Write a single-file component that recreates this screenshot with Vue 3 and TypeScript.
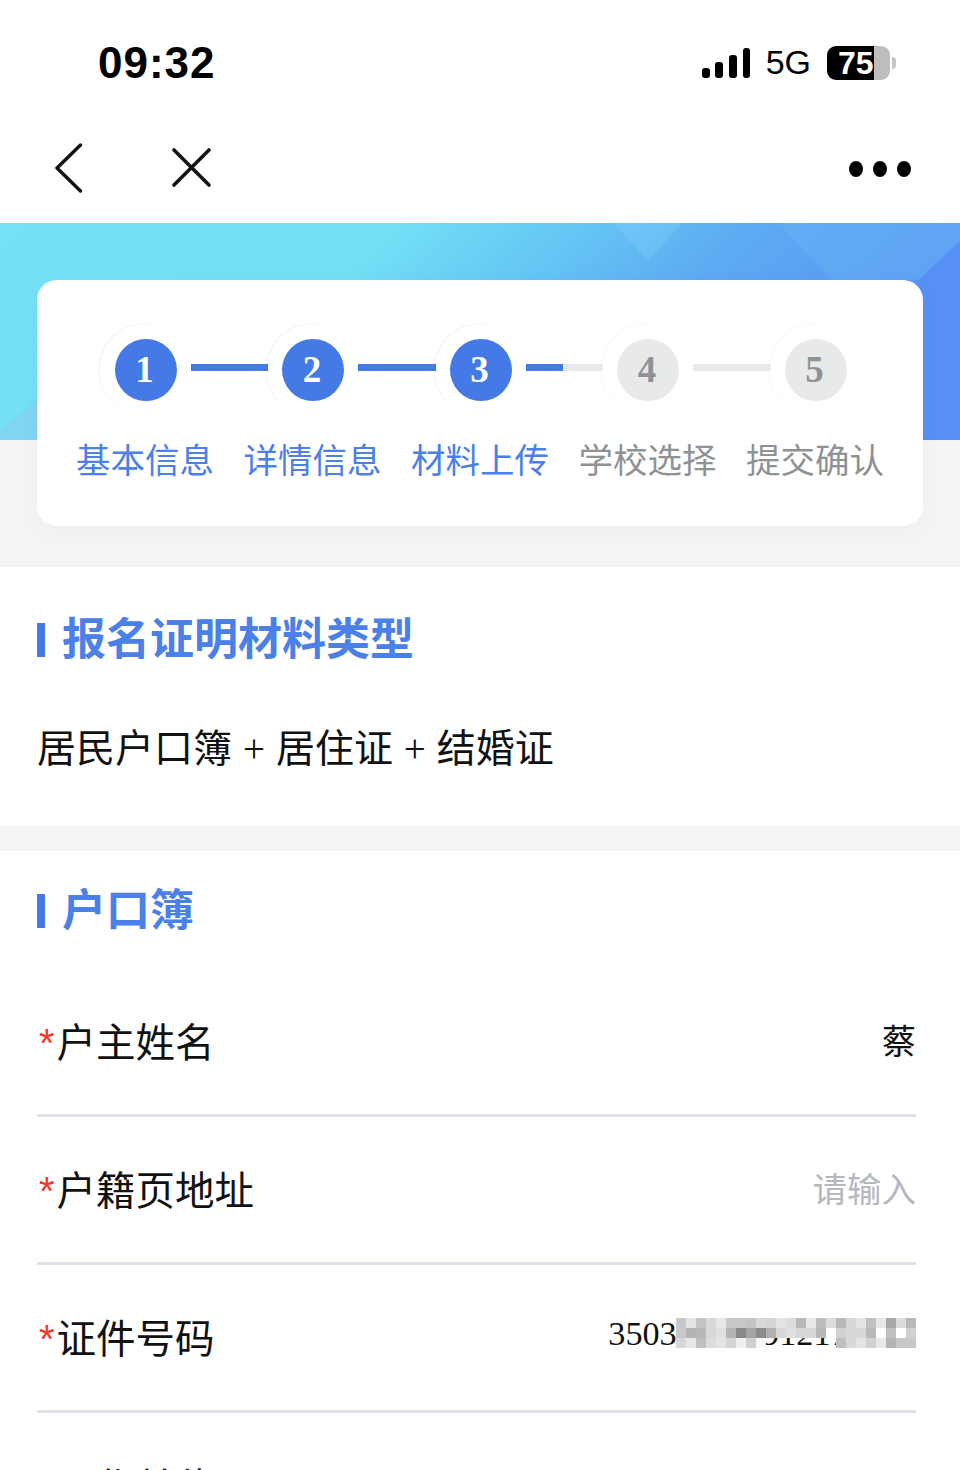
<script setup lang="ts">
const steps = [
  { n: 1, label: '基本信息', on: true },
  { n: 2, label: '详情信息', on: true },
  { n: 3, label: '材料上传', on: true },
  { n: 4, label: '学校选择', on: false },
  { n: 5, label: '提交确认', on: false },
]
const connectors = [100, 100, 48, 0]
const rows = [
  { label: '户主姓名', value: '蔡', kind: 'val' },
  { label: '户籍页地址', value: '请输入', kind: 'ph' },
]
const mosaicShades = [
  'c8,e4,c4,d8,e8,c8,c8,c4,d8,d4,e4,dc,b8,e8,bc,dc,b8,d8,e4,c0,e8,a8,dc,b8',
  'c8,b4,b8,d8,e0,b4,88,a4,8c,b0,d8,e0,d8,d8,b8,ff,d0,d8,d8,b8,ff,c0,ff,d0',
  'd8,e8,c0,dc,e4,d4,f0,d0,f8,0,0,0,0,0,0,0,c0,d8,e4,d0,e8,b4,c8,c8',
]
const mosaic = mosaicShades.flatMap((r) =>
  r.split(',').map((h) => (h === '0' ? 'transparent' : `#${h}${h}${h}`)),
)
</script>

<template>
  <div class="page">
    <header class="status">
      <span class="time">09:32</span>
      <div class="status-right">
        <svg class="signal" viewBox="0 0 48 30" width="48" height="30">
          <rect x="0" y="20" width="8" height="10" rx="3" />
          <rect x="13" y="14" width="8" height="16" rx="3" />
          <rect x="27" y="7" width="8" height="23" rx="3" />
          <rect x="41" y="0" width="7" height="30" rx="3" />
        </svg>
        <span class="net">5G</span>
        <div class="battery">
          <div class="battery-body"><span class="battery-num">75</span></div>
          <i class="battery-cap"></i>
        </div>
      </div>
    </header>

    <nav class="nav">
      <div class="nav-left">
        <svg width="32" height="52" viewBox="0 0 32 52" fill="none" stroke="#111" stroke-width="3.4" stroke-linecap="round" stroke-linejoin="round">
          <path d="M27.5 2 L4 25 L27.5 48" />
        </svg>
        <svg class="close" width="44" height="44" viewBox="0 0 44 44" fill="none" stroke="#111" stroke-width="3.6" stroke-linecap="round">
          <path d="M4 3 L39 38 M39 3 L4 38" />
        </svg>
      </div>
      <div class="dots"><i></i><i></i><i></i></div>
    </nav>

    <section class="hero">
      <svg class="hero-art" viewBox="0 0 960 217" preserveAspectRatio="none">
        <defs>
          <linearGradient id="heroGrad" x1="0" y1="0" x2="1" y2="0.23">
            <stop offset="0" stop-color="#74e2f6" />
            <stop offset="0.4" stop-color="#72dff5" />
            <stop offset="0.6" stop-color="#64c2f4" />
            <stop offset="0.75" stop-color="#5daaf2" />
            <stop offset="1" stop-color="#5a94f4" />
          </linearGradient>
        </defs>
        <rect width="960" height="217" fill="url(#heroGrad)" />
        <path d="M614 0 L682 0 L648 38 Z" fill="#8fdcfb" opacity="0.25" />
        <path d="M778 0 L960 0 L960 57 L832 57 Z" fill="#66b4f5" opacity="0.45" />
        <path d="M960 18 L913 62 L913 217 L960 217 Z" fill="#5690f5" />
        <path d="M0 217 L0 207 L37 177 L37 217 Z" fill="#82d4f4" />
      </svg>
      <div class="card">
        <div class="steps">
          <template v-for="(s, i) in steps" :key="s.n">
            <div class="step" :class="{ on: s.on }">
              <div class="bubble">
                <span class="num">{{ s.n }}</span>
              </div>
              <span class="step-label">{{ s.label }}</span>
            </div>
            <div v-if="i < connectors.length" class="link">
              <div class="link-fill" :style="{ width: connectors[i] + '%' }"></div>
            </div>
          </template>
        </div>
      </div>
    </section>

    <section class="block first">
      <h2 class="title">报名证明材料类型</h2>
      <p class="type">居民户口簿 + 居住证 + 结婚证</p>
    </section>

    <section class="block second">
      <h2 class="title">户口簿</h2>
      <div class="form">
        <div v-for="r in rows" :key="r.label" class="row">
          <span class="label"><em>*</em>{{ r.label }}</span>
          <span :class="r.kind">{{ r.value }}</span>
        </div>
        <div class="row">
          <span class="label"><em>*</em>证件号码</span>
          <div class="idnum">
            <span class="id-text">350300000912170000</span>
            <div class="mosaic">
              <i v-for="(c, i) in mosaic" :key="i" :style="{ background: c }"></i>
            </div>
          </div>
        </div>
        <div class="row last">
          <span class="label"><em>*</em>工作单位</span>
          <span class="ph">请输入</span>
        </div>
      </div>
    </section>
  </div>
</template>

<style>
html, body { margin: 0; padding: 0; background: #fff; overflow: hidden; }
</style>

<style scoped>
.page {
  width: 960px;
  height: 1470px;
  overflow: hidden;
  background: #f4f4f4;
  font-family: "Liberation Sans", "Noto Sans CJK SC", sans-serif;
  color: #111;
}
.status {
  height: 115px;
  background: #fff;
  display: flex;
  align-items: center;
  justify-content: space-between;
  padding: 10px 64px 0 98px;
  box-sizing: border-box;
}
.time {
  font-size: 44px;
  font-weight: 700;
  letter-spacing: 1px;
  color: #000;
}
.status-right { display: flex; align-items: center; }
.signal { fill: #000; margin-right: 16px; }
.net { font-size: 34px; margin-right: 16px; color: #000; }
.battery { display: flex; align-items: center; }
.battery-body {
  width: 63px;
  height: 34px;
  border-radius: 9px;
  background: linear-gradient(90deg, #000 0 75%, #bdbdbd 75% 100%);
  display: flex;
  align-items: center;
  padding-left: 11px;
  box-sizing: border-box;
}
.battery-num { color: #fff; font-size: 32px; font-weight: 700; line-height: 34px; }
.battery-cap {
  width: 4px;
  height: 12px;
  margin-left: 2px;
  border-radius: 0 4px 4px 0;
  background: #c4c4c4;
}
.nav {
  height: 108px;
  background: #fff;
  display: flex;
  align-items: center;
  justify-content: space-between;
  padding: 0 49px 0 53px;
  box-sizing: border-box;
}
.nav-left { display: flex; align-items: center; }
.close { margin-left: 85px; }
.dots { display: flex; gap: 10px; }
.dots i { width: 14px; height: 16px; border-radius: 50%; background: #000; }
.hero {
  position: relative;
  height: 344px;
  padding: 57px 37px 0;
  box-sizing: border-box;
}
.hero-art {
  position: absolute;
  left: 0;
  top: 0;
  width: 960px;
  height: 217px;
}
.card {
  position: relative;
  height: 246px;
  background: #fff;
  border-radius: 20px;
  box-shadow: 0 4px 24px rgba(0, 0, 0, 0.03);
  padding-top: 59px;
  box-sizing: border-box;
}
.steps {
  display: flex;
  justify-content: center;
  align-items: flex-start;
  padding-left: 1px;
}
.step {
  width: 90px;
  position: relative;
  display: flex;
  flex-direction: column;
  align-items: center;
  flex: none;
}
.bubble {
  width: 62px;
  height: 62px;
  border-radius: 50%;
  background: #e8e9e9;
  display: flex;
  align-items: center;
  justify-content: center;
  padding: 0 2px 2px 0;
  box-sizing: border-box;
  box-shadow: 0 0 0 15px #fff, -2px -1px 0 15px #f6f7fc;
}
.step:not(.on) .bubble { box-shadow: 0 0 0 15px #fff, -2px -1px 0 15px #fafafa; }
.num {
  font-family: "Liberation Serif", serif;
  font-size: 37px;
  font-weight: 700;
  color: #8f9295;
}
.step-label {
  position: relative;
  margin: 37px 0 0 -3px;
  white-space: nowrap;
  font-size: 34.5px;
  line-height: 46px;
  color: #8f9295;
  width: 136px;
  text-align: center;
}
.step.on .bubble { background: #4479e6; }
.step.on .num { color: #fff; }
.step.on .step-label { color: #4a80e8; }
.link {
  position: relative;
  z-index: 1;
  width: 77.5px;
  height: 7px;
  margin-top: 25px;
  background: #e8e9e9;
  flex: none;
}
.link-fill { height: 100%; background: #4479e6; }
.block { background: #fff; padding: 0 44px 0 37px; }
.first { height: 259px; margin-top: 0; }
.second { margin-top: 25px; height: 619px; }
.title {
  margin: 0;
  display: flex;
  align-items: center;
  font-size: 44px;
  font-weight: 700;
  color: #4a80e8;
  line-height: 60px;
}
.title::before {
  content: "";
  width: 8px;
  height: 34px;
  background: #4479e6;
  margin-right: 17px;
}
.first .title { padding-top: 43px; }
.second .title { padding-top: 30px; }
.type {
  margin: 52px 0 0;
  font-family: "Liberation Serif", "Noto Sans CJK SC", serif;
  font-size: 39px;
  line-height: 54px;
  word-spacing: 1.2px;
  color: #111;
}
.form { margin-top: 28px; }
.row {
  height: 148px;
  box-sizing: border-box;
  border-bottom: 3px solid #e0e2ea;
  padding-bottom: 5px;
  display: flex;
  align-items: center;
  justify-content: space-between;
}
.row.last { border-bottom: none; }
.label { font-size: 39.5px; color: #111; }
.label em { font-style: normal; color: #f03a2e; font-size: 40px; line-height: 1; margin: 0 2px 0 2px; }
.val { font-size: 34px; color: #111; }
.ph { font-size: 34.5px; color: #b4b7bf; }
.idnum { position: relative; margin-bottom: 2px; }
.id-text { font-family: "Liberation Serif", serif; font-size: 34.2px; color: #111; }
.mosaic {
  position: absolute;
  right: 0;
  top: 3px;
  width: 240px;
  display: grid;
  grid-template-columns: repeat(24, 10px);
  grid-auto-rows: 10px;
}
.mosaic i { display: block; }
</style>
